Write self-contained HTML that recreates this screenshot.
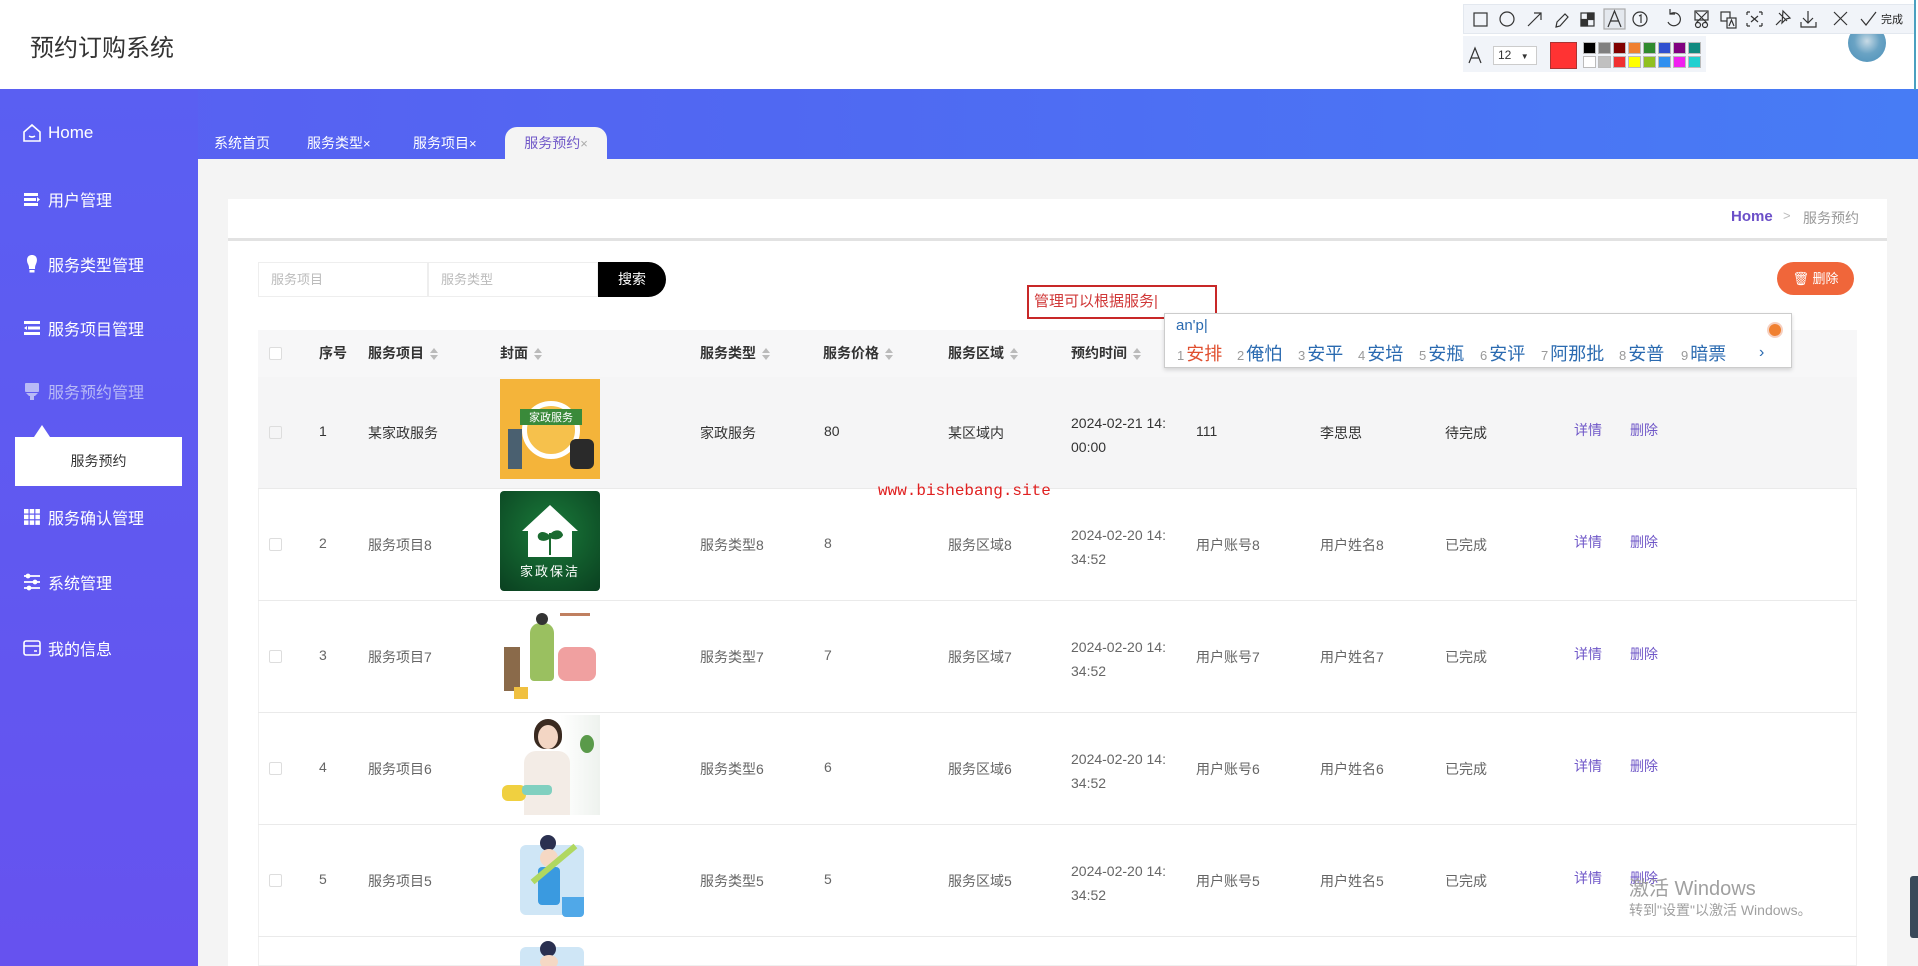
<!DOCTYPE html>
<html><head><meta charset="utf-8">
<style>
*{margin:0;padding:0;box-sizing:border-box}
body{width:1918px;height:966px;overflow:hidden;position:relative;background:#f4f4f4;font-family:"Liberation Sans","Noto Sans CJK SC",sans-serif;font-size:14px;color:#333}
.a{position:absolute}
#hdr{left:0;top:0;width:1918px;height:89px;background:#fff}
#bar{left:0;top:89px;width:1918px;height:70px;background:linear-gradient(90deg,#5a5ff2 0%,#5068f2 40%,#477cf5 100%)}
#side{left:0;top:89px;width:198px;height:877px;background:linear-gradient(180deg,#5a5ff2 0%,#6652ef 100%)}
.mi{position:absolute;left:22px;color:#fff;font-size:16px;display:flex;align-items:center;gap:6px;height:24px}
.mi svg{width:20px;height:20px}
.tab{position:absolute;top:127px;height:32px;line-height:32px;color:#fff;font-size:14px}
.card{left:228px;top:199px;width:1659px;height:767px;background:#fff}
.th{position:absolute;top:330px;height:47px;line-height:47px;font-size:14px;color:#333;font-weight:bold}
.sort{display:inline-block;width:8px;height:12px;vertical-align:middle;margin-left:6px;position:relative}
.sort:before{content:"";position:absolute;left:0;top:0;border:4px solid transparent;border-bottom:5px solid #bbb;border-top:0}
.sort:after{content:"";position:absolute;left:0;top:7px;border:4px solid transparent;border-top:5px solid #bbb;border-bottom:0}
.row{position:absolute;left:258px;width:1599px;height:112px;border-bottom:1px solid #eaeaea}
.c{position:absolute;font-size:14px;color:#666}
.cb{position:absolute;width:13px;height:13px;border:1px solid #ddd;border-radius:2px;background:#fff}
.img{position:absolute;left:242px;width:100px;height:100px;overflow:hidden}
.lk{position:absolute;color:#7058c8;font-size:14px}
.sw{position:absolute;width:13px;height:12px;border:1px solid #bbb}
.cand{position:absolute;top:340px;font-size:18px;color:#2a6ab0;white-space:nowrap}
.cand small{font-size:13px;color:#999;margin-right:2px}
</style></head><body>
<div id="hdr" class="a">
 <div class="a" style="left:30px;top:28px;font-size:24px;color:#333">预约订购系统</div>
 <div class="a" style="left:1848px;top:24px;width:38px;height:38px;border-radius:50%;background:radial-gradient(circle at 50% 45%,#c8dbe6 0,#6aa3c4 45%,#4a8fb8 100%)"></div>
</div>
<!-- screenshot tool toolbar -->
<div class="a" style="left:1463px;top:4px;width:453px;height:30px;background:#f1f4f9;border:1px solid #e3e8ef"></div>
<div class="a" style="left:1463px;top:36px;width:243px;height:36px;background:#f1f4f9"></div>
<svg class="a" style="left:1463px;top:0" width="455" height="75" viewBox="0 0 455 75" fill="none" stroke="#333" stroke-width="1.2">
 <rect x="11" y="13" width="13" height="13"/>
 <circle cx="44" cy="19" r="7"/>
 <path d="M65 26 L78 13 M71 13 H78 V20"/>
 <path d="M93 27 L97 26 L105 17 L102 14 L94 22 Z"/>
 <rect x="118" y="13" width="13" height="13"/><rect x="124.5" y="13" width="6.5" height="6.5" fill="#333"/><rect x="118" y="19.5" width="6.5" height="6.5" fill="#333"/>
 <rect x="141" y="9" width="21" height="20" fill="#e4e8ee" stroke="#aaa"/><path d="M145 27 L151.5 11 L158 27 M147.5 21 H155.5"/>
 <circle cx="177" cy="19" r="7"/><path d="M176 16 L178 15 V23"/>
 <path d="M207 14 A6.5 6.5 0 1 1 205 22 M207 9 V14 H212"/>
 <path d="M233 12 L244 23 M244 12 L233 23"/><circle cx="235" cy="25" r="2.5"/><circle cx="242" cy="25" r="2.5"/><rect x="232" y="11" width="13" height="9"/>
 <rect x="258" y="12" width="9" height="9"/><rect x="264" y="18" width="9" height="10" fill="#f1f4f9"/><path d="M266 26 L268.5 20 L271 26"/>
 <path d="M284 12 H287 M284 12 V15 M299 12 H296 M299 12 V15 M284 26 H287 M284 26 V23 M299 26 H296 M299 26 V23 M288 16 L295 22 M295 16 L288 22"/>
 <path d="M313 25 L318 20 M316 13 L324 21 M320 11 L327 18 L323 19 L319 23 Z"/>
 <path d="M345 11 V23 M340 18 L345 23 L350 18 M338 22 V27 H353 V22"/>
 <path d="M371 12 L384 25 M384 12 L371 25"/>
 <path d="M398 19 L403 25 L413 12"/>
 <path d="M6 63 L12 48 L18 63 M8 58 H16"/>
</svg>
<div class="a" style="left:1881px;top:11px;font-size:11px;color:#222">完成</div>
<div class="a" style="left:1493px;top:46px;width:44px;height:19px;background:#fff;border:1px solid #ccc;font-size:12px;line-height:17px;padding-left:4px">12 <span style="font-size:8px;margin-left:6px">▼</span></div>
<div class="a" style="left:1550px;top:42px;width:27px;height:27px;background:#f33;border:1px solid #a33"></div>
<div class="sw" style="left:1583px;top:42px;background:#000"></div><div class="sw" style="left:1598px;top:42px;background:#808080"></div><div class="sw" style="left:1613px;top:42px;background:#800000"></div><div class="sw" style="left:1628px;top:42px;background:#f08030"></div><div class="sw" style="left:1643px;top:42px;background:#2f8a2f"></div><div class="sw" style="left:1658px;top:42px;background:#3050d0"></div><div class="sw" style="left:1673px;top:42px;background:#800080"></div><div class="sw" style="left:1688px;top:42px;background:#108a80"></div>
<div class="sw" style="left:1583px;top:56px;background:#fff"></div><div class="sw" style="left:1598px;top:56px;background:#c0c0c0"></div><div class="sw" style="left:1613px;top:56px;background:#f03030"></div><div class="sw" style="left:1628px;top:56px;background:#ffff00"></div><div class="sw" style="left:1643px;top:56px;background:#90c020"></div><div class="sw" style="left:1658px;top:56px;background:#3090f0"></div><div class="sw" style="left:1673px;top:56px;background:#f020f0"></div><div class="sw" style="left:1688px;top:56px;background:#20d0d0"></div>

<div id="bar" class="a"></div>
<div id="side" class="a">
 <div class="mi" style="top:32px;font-size:17px"><svg viewBox="0 0 20 20" fill="none" stroke="#fff" stroke-width="1.6"><path d="M2 9 L10 2 L18 9 V18 H2 Z"/><path d="M7 13 Q10 15 13 13"/></svg>Home</div>
 <div class="mi" style="top:98px"><svg viewBox="0 0 20 20" fill="#fff"><rect x="2" y="4" width="14" height="3"/><rect x="2" y="9" width="12" height="3"/><rect x="2" y="14" width="14" height="3"/><path d="M15 8 L18 10.5 L15 13Z"/></svg>用户管理</div>
 <div class="mi" style="top:163px"><svg viewBox="0 0 20 20" fill="#fff"><path d="M10 1 C5 1 4 6 6 10 C7 12 7 13 7 15 H13 C13 13 13 12 14 10 C16 6 15 1 10 1Z"/><rect x="7.5" y="16" width="5" height="2.5"/></svg>服务类型管理</div>
 <div class="mi" style="top:227px"><svg viewBox="0 0 20 20" fill="#fff"><rect x="2" y="3" width="16" height="3"/><rect x="6" y="8.5" width="12" height="3"/><rect x="2" y="14" width="16" height="3"/><path d="M5 8 L2 10 L5 12Z"/></svg>服务项目管理</div>
 <div class="mi" style="top:290px;color:#b8b9f6"><svg viewBox="0 0 20 20" fill="#b8b9f6"><rect x="3" y="2" width="14" height="9" rx="1"/><path d="M4 12 H16 L13 15 H7Z"/><rect x="8" y="15" width="4" height="4"/></svg>服务预约管理</div>
 <div class="a" style="left:34px;top:336px;width:0;height:0;border-left:8px solid transparent;border-right:8px solid transparent;border-bottom:12px solid #fff"></div>
 <div class="a" style="left:15px;top:348px;width:167px;height:49px;background:#fff;color:#333;font-size:14px;line-height:49px;text-align:center">服务预约</div>
 <div class="mi" style="top:416px"><svg viewBox="0 0 20 20" fill="#fff"><rect x="2" y="2" width="4.5" height="4.5"/><rect x="7.7" y="2" width="4.5" height="4.5"/><rect x="13.4" y="2" width="4.5" height="4.5"/><rect x="2" y="7.7" width="4.5" height="4.5"/><rect x="7.7" y="7.7" width="4.5" height="4.5"/><rect x="13.4" y="7.7" width="4.5" height="4.5"/><rect x="2" y="13.4" width="4.5" height="4.5"/><rect x="7.7" y="13.4" width="4.5" height="4.5"/><rect x="13.4" y="13.4" width="4.5" height="4.5"/></svg>服务确认管理</div>
 <div class="mi" style="top:481px"><svg viewBox="0 0 20 20" fill="none" stroke="#fff" stroke-width="1.8"><path d="M2 4 H18 M2 10 H18 M2 16 H18"/><circle cx="6" cy="4" r="1.5" fill="#fff"/><circle cx="13" cy="10" r="1.5" fill="#fff"/><circle cx="7" cy="16" r="1.5" fill="#fff"/></svg>系统管理</div>
 <div class="mi" style="top:547px"><svg viewBox="0 0 20 20" fill="none" stroke="#fff" stroke-width="1.6"><rect x="2" y="3" width="16" height="14" rx="2"/><path d="M2 8 H18 M12 13 H15"/></svg>我的信息</div>
</div>
<div class="tab" style="left:214px">系统首页</div>
<div class="tab" style="left:307px">服务类型<span style="font-size:13px">×</span></div>
<div class="tab" style="left:413px">服务项目<span style="font-size:13px">×</span></div>
<div class="a" style="left:505px;top:127px;width:102px;height:32px;background:#f4f4f4;border-radius:12px 12px 0 0;color:#7058c8;line-height:32px;text-align:center;font-size:14px">服务预约<span style="color:#aaa;font-size:13px">×</span></div>

<div class="card a"></div>
<div class="a" style="left:228px;top:238px;width:1659px;height:3px;background:#e2e2e2"></div>
<div class="a" style="left:1731px;top:208px;font-size:15px;font-weight:bold;color:#6b4fc8">Home</div>
<div class="a" style="left:1783px;top:208px;font-size:13px;color:#bbb">&gt;</div>
<div class="a" style="left:1803px;top:208px;font-size:14px;color:#999">服务预约</div>

<div class="a" style="left:258px;top:262px;width:170px;height:35px;border:1px solid #eee;color:#bbb;font-size:13px;line-height:33px;padding-left:12px">服务项目</div>
<div class="a" style="left:428px;top:262px;width:170px;height:35px;border:1px solid #eee;color:#bbb;font-size:13px;line-height:33px;padding-left:12px">服务类型</div>
<div class="a" style="left:598px;top:262px;width:68px;height:35px;background:#000;color:#fff;border-radius:0 18px 18px 0;line-height:35px;text-align:center;font-size:14px">搜索</div>
<div class="a" style="left:1777px;top:262px;width:77px;height:33px;background:#f0663a;color:#fff;border-radius:17px;line-height:33px;text-align:center;font-size:13px">🗑 删除</div>

<div class="a" style="left:258px;top:330px;width:1599px;height:636px;background:#fff;border:1px solid #f0f0f0"></div>
<div class="a" style="left:258px;top:330px;width:1599px;height:47px;background:#f7f7f8"></div>
<div class="cb" style="left:269px;top:347px"></div>
<div class="th" style="left:319px">序号</div>
<div class="th" style="left:368px">服务项目<span class="sort"></span></div>
<div class="th" style="left:500px">封面<span class="sort"></span></div>
<div class="th" style="left:700px">服务类型<span class="sort"></span></div>
<div class="th" style="left:823px">服务价格<span class="sort"></span></div>
<div class="th" style="left:948px">服务区域<span class="sort"></span></div>
<div class="th" style="left:1071px">预约时间<span class="sort"></span></div>

<div class="row" style="top:377px;background:#f5f5f6">
 <div class="cb" style="left:11px;top:49px;background:#f5f5f6"></div>
 <div class="c" style="left:61px;top:46px;color:#333">1</div>
 <div class="c" style="left:110px;top:46px;color:#333">某家政服务</div>
 <div class="img" style="top:2px;background:#f4b43a"><div class="a" style="left:22px;top:22px;width:58px;height:58px;border-radius:50%;border:5px solid #fff;background:#f6c14c"></div><div class="a" style="left:20px;top:30px;width:62px;height:16px;background:#3a8a3a;color:#fff;font-size:11px;text-align:center">家政服务</div><div class="a" style="left:8px;top:50px;width:14px;height:40px;background:#4a6070"></div><div class="a" style="left:70px;top:60px;width:24px;height:30px;background:#2a2a2a;border-radius:6px"></div></div>
 <div class="c" style="left:442px;top:46px;color:#333">家政服务</div>
 <div class="c" style="left:566px;top:46px;color:#333">80</div>
 <div class="c" style="left:690px;top:46px;color:#333">某区域内</div>
 <div class="c" style="left:813px;top:34px;color:#333;line-height:24px">2024-02-21 14:<br>00:00</div>
 <div class="c" style="left:938px;top:46px;color:#333">111</div>
 <div class="c" style="left:1062px;top:46px;color:#333">李思思</div>
 <div class="c" style="left:1187px;top:46px;color:#333">待完成</div>
 <div class="lk" style="left:1316px;top:43px">详情</div>
 <div class="lk" style="left:1372px;top:43px">删除</div>
</div>
<div class="row" style="top:489px">
 <div class="cb" style="left:11px;top:49px"></div>
 <div class="c" style="left:61px;top:46px">2</div><div class="c" style="left:110px;top:46px">服务项目8</div>
 <div class="img" style="top:2px;background:radial-gradient(circle at 50% 40%,#1a7a3a,#0a4020);border-radius:4px"><svg class="a" style="left:14px;top:10px" width="72" height="60" viewBox="0 0 72 60"><path d="M36 4 L8 30 L14 30 L14 56 L58 56 L58 30 L64 30 Z" fill="#fff"/><path d="M36 54 V32 M36 36 C28 28 22 34 26 38 C30 40 34 38 36 36 C38 30 46 28 48 34 C46 38 40 38 36 36" fill="#1a6a30" stroke="#1a6a30" stroke-width="2"/></svg><div class="a" style="left:0;top:70px;width:100px;text-align:center;color:#fff;font-size:13px;letter-spacing:2px">家政保洁</div></div>
 <div class="c" style="left:442px;top:46px">服务类型8</div><div class="c" style="left:566px;top:46px">8</div><div class="c" style="left:690px;top:46px">服务区域8</div>
 <div class="c" style="left:813px;top:34px;line-height:24px">2024-02-20 14:<br>34:52</div>
 <div class="c" style="left:938px;top:46px">用户账号8</div><div class="c" style="left:1062px;top:46px">用户姓名8</div><div class="c" style="left:1187px;top:46px">已完成</div>
 <div class="lk" style="left:1316px;top:43px">详情</div><div class="lk" style="left:1372px;top:43px">删除</div>
</div>
<div class="row" style="top:601px">
 <div class="cb" style="left:11px;top:49px"></div>
 <div class="c" style="left:61px;top:46px">3</div><div class="c" style="left:110px;top:46px">服务项目7</div>
 <div class="img" style="top:6px;background:#fff"><div class="a" style="left:58px;top:40px;width:38px;height:34px;background:#f0a0a0;border-radius:8px"></div><div class="a" style="left:4px;top:40px;width:16px;height:44px;background:#8a6a4a"></div><div class="a" style="left:30px;top:16px;width:24px;height:58px;background:#9ac060;border-radius:10px 10px 4px 4px"></div><div class="a" style="left:36px;top:6px;width:12px;height:12px;background:#333;border-radius:50%"></div><div class="a" style="left:60px;top:6px;width:30px;height:3px;background:#c08060"></div><div class="a" style="left:14px;top:80px;width:14px;height:12px;background:#f0c040"></div></div>
 <div class="c" style="left:442px;top:46px">服务类型7</div><div class="c" style="left:566px;top:46px">7</div><div class="c" style="left:690px;top:46px">服务区域7</div>
 <div class="c" style="left:813px;top:34px;line-height:24px">2024-02-20 14:<br>34:52</div>
 <div class="c" style="left:938px;top:46px">用户账号7</div><div class="c" style="left:1062px;top:46px">用户姓名7</div><div class="c" style="left:1187px;top:46px">已完成</div>
 <div class="lk" style="left:1316px;top:43px">详情</div><div class="lk" style="left:1372px;top:43px">删除</div>
</div>
<div class="row" style="top:713px">
 <div class="cb" style="left:11px;top:49px"></div>
 <div class="c" style="left:61px;top:46px">4</div><div class="c" style="left:110px;top:46px">服务项目6</div>
 <div class="img" style="top:2px;background:linear-gradient(90deg,#fff 60%,#eef2ee)"><div class="a" style="left:34px;top:4px;width:28px;height:30px;background:#3a2a20;border-radius:50% 50% 40% 40%"></div><div class="a" style="left:38px;top:10px;width:20px;height:24px;background:#f3d6c4;border-radius:50%"></div><div class="a" style="left:24px;top:36px;width:46px;height:64px;background:#f3ece6;border-radius:12px 12px 0 0"></div><div class="a" style="left:2px;top:70px;width:24px;height:16px;background:#f0d040;border-radius:6px"></div><div class="a" style="left:22px;top:70px;width:30px;height:10px;background:#80d0c0;border-radius:4px"></div><div class="a" style="left:80px;top:20px;width:14px;height:18px;background:#5a9a4a;border-radius:50%"></div></div>
 <div class="c" style="left:442px;top:46px">服务类型6</div><div class="c" style="left:566px;top:46px">6</div><div class="c" style="left:690px;top:46px">服务区域6</div>
 <div class="c" style="left:813px;top:34px;line-height:24px">2024-02-20 14:<br>34:52</div>
 <div class="c" style="left:938px;top:46px">用户账号6</div><div class="c" style="left:1062px;top:46px">用户姓名6</div><div class="c" style="left:1187px;top:46px">已完成</div>
 <div class="lk" style="left:1316px;top:43px">详情</div><div class="lk" style="left:1372px;top:43px">删除</div>
</div>
<div class="row" style="top:825px">
 <div class="cb" style="left:11px;top:49px"></div>
 <div class="c" style="left:61px;top:46px">5</div><div class="c" style="left:110px;top:46px">服务项目5</div>
 <div class="img" style="top:6px;background:#fff"><div class="a" style="left:20px;top:14px;width:64px;height:70px;background:#cfe6f6;border-radius:6px"></div><div class="a" style="left:40px;top:4px;width:16px;height:16px;background:#2a3050;border-radius:50%"></div><div class="a" style="left:40px;top:18px;width:18px;height:18px;background:#f5d8c4;border-radius:50%"></div><div class="a" style="left:38px;top:36px;width:22px;height:38px;background:#3a9ae0;border-radius:4px"></div><div class="a" style="left:62px;top:66px;width:22px;height:20px;background:#50a8e8;border-radius:0 0 4px 4px"></div><div class="a" style="left:26px;top:30px;width:56px;height:6px;background:#b0d860;transform:rotate(-40deg)"></div></div>
 <div class="c" style="left:442px;top:46px">服务类型5</div><div class="c" style="left:566px;top:46px">5</div><div class="c" style="left:690px;top:46px">服务区域5</div>
 <div class="c" style="left:813px;top:34px;line-height:24px">2024-02-20 14:<br>34:52</div>
 <div class="c" style="left:938px;top:46px">用户账号5</div><div class="c" style="left:1062px;top:46px">用户姓名5</div><div class="c" style="left:1187px;top:46px">已完成</div>
 <div class="lk" style="left:1316px;top:43px">详情</div><div class="lk" style="left:1372px;top:43px">删除</div>
</div>
<div class="a" style="left:500px;top:941px;width:100px;height:25px;overflow:hidden"><div class="a" style="left:20px;top:6px;width:64px;height:30px;background:#cfe6f6;border-radius:6px"></div><div class="a" style="left:40px;top:0;width:16px;height:16px;background:#2a3050;border-radius:50%"></div><div class="a" style="left:40px;top:14px;width:18px;height:14px;background:#f5d8c4;border-radius:50%"></div></div>

<div class="a" style="left:878px;top:482px;font-family:'Liberation Mono',monospace;font-size:16px;color:#e02020">www.bishebang.site</div>
<div class="a" style="left:1027px;top:285px;width:190px;height:34px;border:2px solid #c82828;background:#fff;color:#d03838;font-size:15px;line-height:30px;padding-left:5px">管理可以根据服务|</div>
<div class="a" style="left:1164px;top:313px;width:628px;height:55px;background:#fff;border:1px solid #ccc;box-shadow:0 2px 4px rgba(0,0,0,.15)">
 <div class="a" style="left:11px;top:3px;font-size:15px;color:#2a6ab0">an'p|</div>
 <div class="a" style="left:594px;top:30px;font-size:16px;color:#2a6ab0">›</div>
 <div class="a" style="left:602px;top:8px;width:16px;height:16px;border-radius:50%;background:#f08030;border:2px solid #f6d0c0"></div>
</div>
<div class="cand" style="left:1177px;color:#e05030"><small>1</small>安排</div>
<div class="cand" style="left:1237px"><small>2</small>俺怕</div>
<div class="cand" style="left:1298px"><small>3</small>安平</div>
<div class="cand" style="left:1358px"><small>4</small>安培</div>
<div class="cand" style="left:1419px"><small>5</small>安瓶</div>
<div class="cand" style="left:1480px"><small>6</small>安评</div>
<div class="cand" style="left:1541px"><small>7</small>阿那批</div>
<div class="cand" style="left:1619px"><small>8</small>安普</div>
<div class="cand" style="left:1681px"><small>9</small>暗票</div>
<div class="a" style="left:1629px;top:872px;font-size:20px;color:#a0a0a0">激活 Windows</div>
<div class="a" style="left:1629px;top:900px;font-size:14px;color:#a0a0a0">转到"设置"以激活 Windows。</div>
<div class="a" style="left:1910px;top:876px;width:8px;height:62px;background:#3a4a5a;border-radius:3px 0 0 3px"></div>
<div class="a" style="left:1914px;top:0;width:2px;height:90px;background:#4aa0c0"></div>
</body></html>
